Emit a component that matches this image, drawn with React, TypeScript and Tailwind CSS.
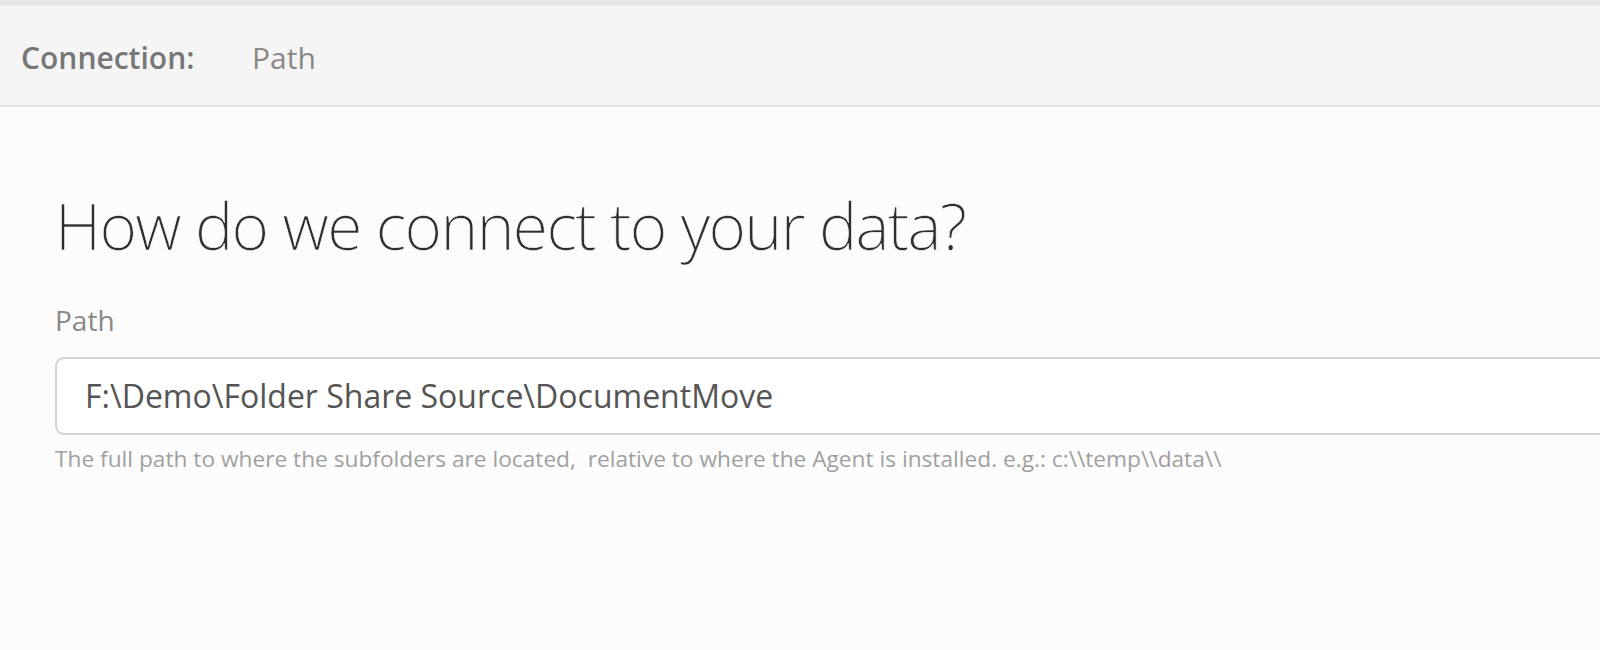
export default function App() {
  return (
    <div className="w-[1600px] h-[650px] overflow-hidden bg-[#fcfcfc] font-['Open_Sans',sans-serif]">
      <div className="h-[6px] bg-[#e8e8e8]" />
      <div className="h-[101px] bg-[#f5f5f5] border-b-2 border-[#e0e0e0] flex items-center pt-[4px] pl-[21px] text-[30px]">
        <span className="font-semibold text-[#777] w-[231px]">Connection:</span>
        <span className="text-[#888]">Path</span>
      </div>
      <div className="pl-[55px] pt-[84px]">
        {/* no light face installed: a stroke in the page colour thins the regular glyphs */}
        <h1 className="text-[64px] leading-[70px] font-light text-[#2f2f2f] tracking-[-1.6px] [-webkit-text-stroke:0.6px_#fcfcfc]">
          How do we connect to your data?
        </h1>
        <label className="block mt-[39px] text-[28px] leading-[40px] text-[#888]">Path</label>
        <div className="mt-[17px] w-[1600px] h-[78px] bg-white border-2 border-[#d4d4d4] rounded-[9px] flex items-center pl-[28px] text-[32px] text-[#555]">
          F:\Demo\Folder Share Source\DocumentMove
        </div>
        <p className="mt-[8px] text-[22.7px] leading-[32px] text-[#a0a0a0]">
          The full path to where the subfolders are located,&nbsp; relative to where the Agent is installed. e.g.: c:\\temp\\data\\
        </p>
      </div>
    </div>
  );
}
